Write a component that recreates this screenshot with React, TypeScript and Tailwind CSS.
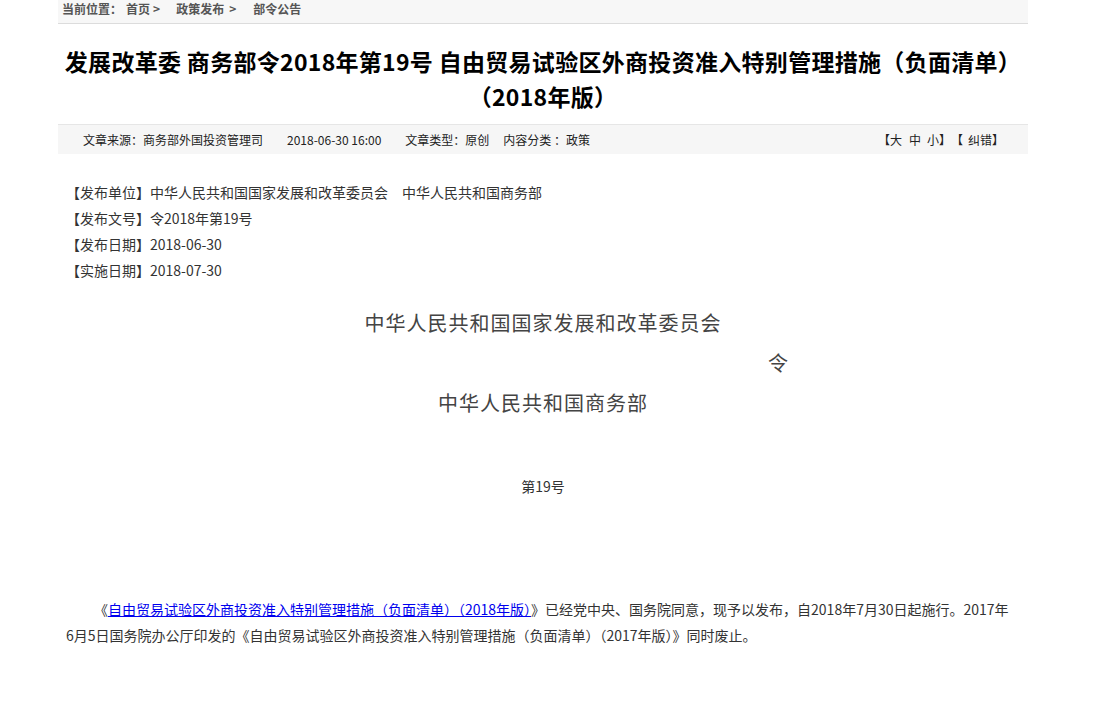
import React from "react";

const cjk = { fontFamily: '"Noto Sans CJK SC", "Noto Sans", sans-serif' };
const song = { fontFamily: '"Noto Sans CJK SC", "Liberation Sans", sans-serif' };

export default function App() {
  return (
    <div className="w-[1115px] min-h-[702px] bg-white" style={song}>
      <div className="ml-[58px] w-[970px]">
        {/* breadcrumb */}
        <div className="h-[24px] bg-[#f7f7f7] border-b border-[#dcdcdc] pl-[4px] pt-[2px] flex items-start text-[12px] font-bold text-[#555] leading-[14px]">
          <span>当前位置：</span>
          <span className="ml-[4px]">首页</span>
          <span className="ml-[3px]">&gt;</span>
          <span className="ml-[16px]">政策发布</span>
          <span className="ml-[5px]">&gt;</span>
          <span className="ml-[17px]">部令公告</span>
        </div>

        {/* title */}
        <h1
          className="text-center text-[23px] font-bold leading-[35px] tracking-[0.3px] text-black pt-[20px] pb-[10px]"
          style={cjk}
        >
          发展改革委 商务部令2018年第19号 自由贸易试验区外商投资准入特别管理措施（负面清单）
          <br />
          （2018年版）
        </h1>

        {/* info bar */}
        <div className="h-[30px] bg-[#f6f6f6] border-t border-[#e6e6e6] flex items-center justify-between text-[12px] text-[#222] leading-none">
          <div className="flex items-center pl-[25px]">
            <span>文章来源：商务部外国投资管理司</span>
            <span className="ml-[24px]">2018-06-30 16:00</span>
            <span className="ml-[24px]">文章类型：原创</span>
            <span className="ml-[14px]">内容分类 ：政策</span>
          </div>
          <div className="pr-[24px] flex items-center">
            <span>【大</span>
            <span className="ml-[7px]">中</span>
            <span className="ml-[6px]">小】</span>
            <span>【</span>
            <span className="ml-[5px]">纠错】</span>
          </div>
        </div>

        {/* meta */}
        <div className="pt-[25px] pl-[8px] text-[14px] leading-[26px] text-[#333]">
          <div>【发布单位】中华人民共和国国家发展和改革委员会　中华人民共和国商务部</div>
          <div>【发布文号】令2018年第19号</div>
          <div>【发布日期】2018-06-30</div>
          <div>【实施日期】2018-07-30</div>
        </div>

        {/* center */}
        <div className="pt-[20px] text-[20px] leading-[40px] text-[#444]">
          <div className="text-center tracking-[1px]">中华人民共和国国家发展和改革委员会</div>
          <div className="pl-[710px]">令</div>
          <div className="text-center tracking-[1px]">中华人民共和国商务部</div>
        </div>

        <div className="pt-[50px] text-center text-[14px] leading-[26px] text-[#333]">第19号</div>

        {/* paragraph */}
        <p className="mt-[97px] pl-[8px] pr-[4px] text-[14px] leading-[26px] text-[#333]">
          <span className="whitespace-nowrap">
            <span className="inline-block w-[28px]"></span>《<a href="#" className="text-[#0000ee] underline">自由贸易试验区外商投资准入特别管理措施（负面清单）（2018年版）</a>》已经党中央、国务院同意，现予以发布，自2018年7月30日起施行。2017年
          </span>
          <br />
          6月5日国务院办公厅印发的《自由贸易试验区外商投资准入特别管理措施（负面清单）（2017年版）》同时废止。
        </p>
      </div>
    </div>
  );
}
